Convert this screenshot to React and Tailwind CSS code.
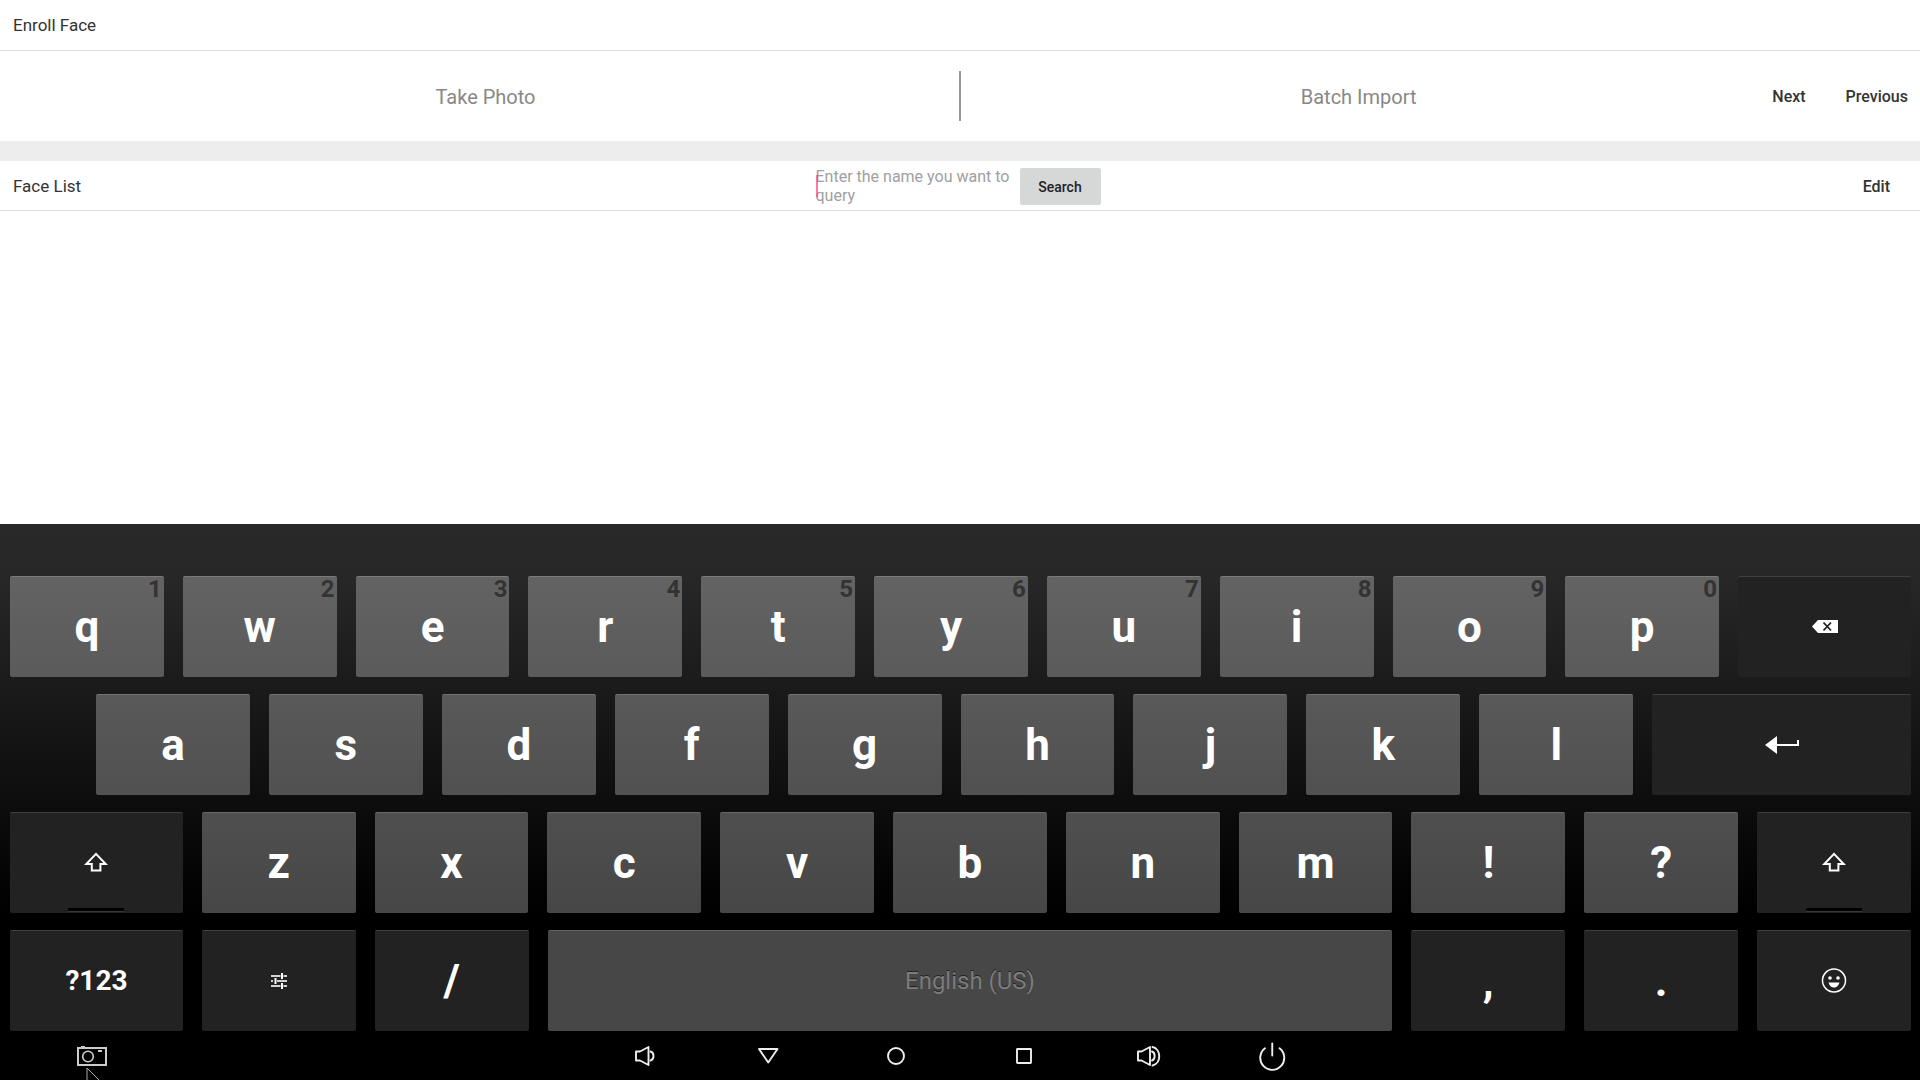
import React, { useState } from 'react';

const ShiftIcon = () => (
  <svg className="h-6 w-6" viewBox="0 0 24 24" fill="none" stroke="currentColor" strokeWidth="2">
    <path d="M12 2.900 2.300 13H7.800v6.500h8.600V13h5.300Z" />
  </svg>
);

const BackspaceIcon = () => (
  <svg className="h-4 w-[26px]" viewBox="0 0 26 16">
    <path d="M6 1h20v13H6L0 7.500Z" fill="currentColor" />
    <path d="m11.500 3.500 7.500 8m0-8-7.500 8" stroke="#222" strokeWidth="1.800" />
  </svg>
);

const EnterIcon = () => (
  <svg className="h-[18px] w-[34px]" viewBox="0 0 34 18">
    <path d="M0 9 12 0v18Z" fill="currentColor" />
    <path d="M12 9h21V4" fill="none" stroke="currentColor" strokeWidth="2" />
  </svg>
);

const SettingsIcon = () => (
  <svg className="h-[18px] w-4 text-neutral-300" viewBox="0 0 16 18" fill="none" stroke="currentColor" strokeWidth="2">
    <path d="M0 4h9.500M12.500 4H16M0 9h2M6 9h10M0 14h9.500M12.500 14H16" />
    <path d="M11 1v6M11 11v6M4.500 6v6" stroke="#fff" />
  </svg>
);

const SmileIcon = () => (
  <svg className="h-[26px] w-[26px]" viewBox="0 0 26 26">
    <circle cx="13" cy="12.500" r="11.500" fill="none" stroke="currentColor" strokeWidth="1.500" />
    <circle cx="9" cy="10" r="1.800" fill="currentColor" />
    <circle cx="17" cy="10" r="1.800" fill="currentColor" />
    <path d="M7.500 14.500h11q-1.500 5-5.500 5t-5.500-5Z" fill="currentColor" />
  </svg>
);

const CameraIcon = () => (
  <svg className="h-5 w-[30px]" viewBox="0 0 30 20" fill="none" stroke="#ccc">
    <rect x="1" y="2" width="28" height="17" strokeWidth="2" />
    <circle cx="11" cy="10.500" r="5.300" strokeWidth="1.600" />
    <path d="M4 .5h4M21 5h4" strokeWidth="2" />
  </svg>
);

const NAV_ITEMS = [
  { label: 'Volume down', icon: <><path d="M11 15.500h4l8.500-4.500v18L15 24.500h-4Z" /><path d="M25.500 15.500c4 1 4 8 0 9" /></> },
  { label: 'Back', icon: <path d="M8 13h18.500L17.250 26.500Z" /> },
  { label: 'Home', icon: <circle cx="19" cy="20" r="8" /> },
  { label: 'Recents', icon: <rect x="14" y="13" width="14" height="14" rx="0.500" /> },
  { label: 'Volume up', icon: <><path d="M9 15.500h3.500l8.500-4.500v18l-8.500-4.500H9Z" /><path d="M23 15.500c3.500 1 3.500 8 0 9M23.500 11c9 2 9 16.500 0 18.500" /></> },
  { label: 'Power', icon: <><path d="M10 12.300a12 12 0 1 0 14.500 0" /><path d="M17.250 7.500V19.500" /></> },
];

const ROWS = [
  [...'qwertyuiop'].map((c, i) => ({ label: c, hint: String((i + 1) % 10) })).concat({ name: 'Backspace', icon: <BackspaceIcon />, size: 'wide', dark: true }),
  [...'asdfghjkl'].map((c) => ({ label: c })).concat({ name: 'Enter', icon: <EnterIcon />, size: 'enter', dark: true }),
  [
    { name: 'Shift', icon: <ShiftIcon />, size: 'wide', dark: true, latch: true },
    ...[...'zxcvbnm!?'].map((c) => ({ label: c })),
    { name: 'Right shift', icon: <ShiftIcon />, dark: true, latch: true },
  ],
  [
    { label: '?123', size: 'wide', dark: true, text: 'text-[28px]' },
    { name: 'Input settings', icon: <SettingsIcon />, dark: true },
    { label: '/', dark: true },
    { label: 'English (US)', size: 'space', text: 'text-2xl font-normal text-[#7c7c7c] [text-shadow:0_-1px_0_#222]' },
    { label: ',', dark: true },
    { label: '.', dark: true },
    { name: 'Emoji', icon: <SmileIcon />, dark: true },
  ],
];

const KEY_SIZES = {
  normal: 'grow-[154]',
  wide: 'grow-[173]',
  enter: 'grow-[259]',
  space: 'grow-[845]',
};

const Key = ({ label, name, icon, hint, size = 'normal', dark, latch, text = 'text-[44px]', onPress }) => (
  <button
    type="button"
    aria-label={name || label}
    onClick={() => onPress(label)}
    className={`relative flex h-[101px] min-w-0 basis-0 items-center justify-center rounded-[2px] border-t font-bold text-white ${KEY_SIZES[size]} ${dark ? 'border-[#404040] bg-[#222]' : 'border-white/15 bg-white/28'}`}
  >
    {icon || <span className={text}>{label}</span>}
    {hint && <span className="absolute top-0 right-[2px] text-2xl leading-6 text-[#333]">{hint}</span>}
    {latch && <span className="absolute bottom-px h-1 w-14 border-b border-[#3a3a3a] bg-black" />}
  </button>
);

export default function App() {
  const [query, setQuery] = useState('');

  const handleKey = (label) => {
    if (label && label.length === 1) setQuery((q) => q + label);
  };

  return (
    <div className="flex min-h-screen flex-col overflow-hidden bg-white font-['Roboto',sans-serif] text-base text-[#333]">
      <header className="flex h-[51px] items-center border-b border-[#dcdcdc] px-[13px] pt-[2px]">
        <h1 className="text-[17px]">Enroll Face</h1>
      </header>

      <section className="flex h-[90px] items-center pr-3">
        <div className="flex flex-1 justify-center pt-[2px] pl-3">
          <button type="button" className="text-xl text-[#888]">Take Photo</button>
        </div>
        <div className="h-[50px] w-[2px] bg-[#999]" />
        <div className="flex flex-1 items-center pt-[2px]">
          <div className="flex flex-1 justify-center">
            <button type="button" className="text-xl text-[#888]">Batch Import</button>
          </div>
          <div className="flex gap-10 pl-4 font-medium">
            <button type="button">Next</button>
            <button type="button">Previous</button>
          </div>
        </div>
      </section>

      <div className="h-5 bg-[#ededed]" />

      <section className="grid h-[50px] grid-cols-[1fr_auto_1fr] items-center border-b border-[#dcdcdc] pt-[2px]">
        <h2 className="pl-[13px] text-[17px]">Face List</h2>
        <form className="flex items-center gap-1 pr-1" onSubmit={(e) => e.preventDefault()}>
          <div className="relative h-10 w-[200px]">
            <textarea
              aria-label="Name to query"
              rows={2}
              value={query}
              onChange={(e) => setQuery(e.target.value)}
              placeholder="Enter the name you want to query"
              className="block h-10 w-full resize-none overflow-hidden leading-[19px] outline-none placeholder:text-[#a0a0a0]"
            />
            <span className="absolute top-2 left-0 h-[22px] w-[2px] bg-[#ff4081]/70" />
          </div>
          <button type="submit" className="h-[37px] w-[81px] rounded-[2px] bg-[#d6d7d7] text-sm font-medium text-[#222]">Search</button>
        </form>
        <button type="button" className="mr-[30px] justify-self-end font-medium">Edit</button>
      </section>

      <main className="flex-1" />

      <div className="bg-black bg-linear-to-b/srgb from-[#292929] via-[#272727] via-10% to-black to-70%">
        <div className="flex flex-col gap-[17px] pt-[52px] pr-[9px] pl-[10px]">
          {ROWS.map((row, i) => (
            <div key={i} className={`flex gap-[19px] ${i === 1 ? 'pl-[86px]' : ''}`}>
              {row.map((key) => <Key key={key.name || key.label} {...key} onPress={handleKey} />)}
            </div>
          ))}
        </div>

        <nav className="relative grid h-[49px] grid-cols-[1fr_auto_1fr] items-center bg-black text-white">
          <button type="button" aria-label="Screenshot" className="ml-[77px] w-[30px]"><CameraIcon /></button>
          <div className="flex">
            {NAV_ITEMS.map(({ label, icon }) => (
              <button key={label} type="button" aria-label={label} className="flex w-[126px] justify-center">
                <svg className="h-10 w-10" viewBox="0 0 40 40" fill="none" stroke="#eee" strokeWidth="1.900" strokeLinecap="round" strokeLinejoin="round">{icon}</svg>
              </button>
            ))}
          </div>
          <svg className="absolute bottom-0 left-[86px] h-[13px] w-4" viewBox="0 0 16 13" fill="none" stroke="#aaa">
            <path d="M1 13V1l12 12" />
          </svg>
        </nav>
      </div>
    </div>
  );
}
